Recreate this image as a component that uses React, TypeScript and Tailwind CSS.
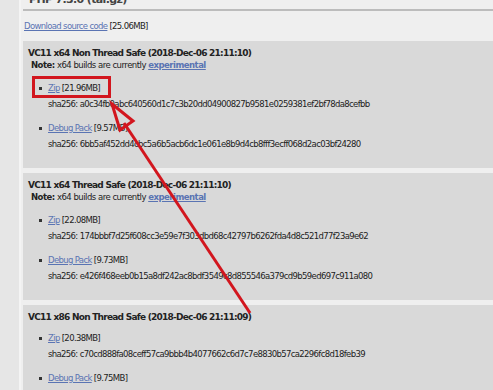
import React from "react";

type Item = { label: string; size: string; sha: string };
type Build = { title: string; note?: boolean; items: Item[] };

const BUILDS: Build[] = [
  {
    title: "VC11 x64 Non Thread Safe (2018-Dec-06 21:11:10)",
    note: true,
    items: [
      { label: "Zip", size: "[21.96MB]", sha: "a0c34fb0abc640560d1c7c3b20dd04900827b9581e0259381ef2bf78da8cefbb" },
      { label: "Debug Pack", size: "[9.57MB]", sha: "6bb5af452dd4cbc5a6b5acb6dc1e061e8b9d4cb8fff3ecff068d2ac03bf24280" },
    ],
  },
  {
    title: "VC11 x64 Thread Safe (2018-Dec-06 21:11:10)",
    note: true,
    items: [
      { label: "Zip", size: "[22.08MB]", sha: "174bbbf7d25f608cc3e59e7f303dbd68c42797b6262fda4d8c521d77f23a9e62" },
      { label: "Debug Pack", size: "[9.73MB]", sha: "e426f468eeb0b15a8df242ac8bdf3549c8d855546a379cd9b59ed697c911a080" },
    ],
  },
  {
    title: "VC11 x86 Non Thread Safe (2018-Dec-06 21:11:09)",
    items: [
      { label: "Zip", size: "[20.38MB]", sha: "c70cd888fa08ceff57ca9bbb4b4077662c6d7c7e8830b57ca2296fc8d18feb39" },
      { label: "Debug Pack", size: "[9.75MB]", sha: "" },
    ],
  },
];

const link = "text-[#5a74b3] underline underline-offset-1";

function BuildBox({ build }: { build: Build }) {
  return (
    <div className="bg-[#d9d9d9] pl-[5px] pt-[6px] pb-[18px]">
      <div className="font-bold text-[9px] tracking-[-0.75px] leading-[13px]">{build.title}</div>
      {build.note && (
        <div className="pl-[3px] leading-[11px] tracking-[-0.5px]">
          <b>Note:</b> x64 builds are currently <a className={`${link} font-bold`}>experimental</a>
        </div>
      )}
      <ul className={`pl-[20px] ${build.note ? "mt-[11px]" : "mt-[8px]"} flex flex-col gap-[12px]`}>
        {build.items.map((it) => (
          <li key={it.label} className="relative">
            <span className="absolute left-[-9px] top-[5px] h-[3px] w-[3px] bg-[#333]" />
            <div className="leading-[12px]">
              <a className={link}>{it.label}</a> {it.size}
            </div>
            {it.sha && <div className="mt-[4px] leading-[12px]">sha256: {it.sha}</div>}
          </li>
        ))}
      </ul>
    </div>
  );
}

export default function App() {
  return (
    <div
      className="relative flex h-[390px] w-[493px] overflow-hidden bg-[#e6e6e6] text-[8.5px] tracking-[-0.65px] text-[#222]"
      style={{ fontFamily: "'DejaVu Sans', Verdana, sans-serif" }}
    >
      <div className="w-[21px] shrink-0 border-r-[2px] border-[#f4f4f4]" />
      <div className="flex-1 bg-[#efefef] pl-[2px]">
        <div className="h-[9px] overflow-hidden">
          <div className="mt-[-8px] pl-[6px] font-bold text-[11px] text-[#444]">PHP 7.3.0 (tar.gz)</div>
        </div>
        <div className="h-[2px] bg-[#bcbcbc]" />
        <div className="pt-[9px] pl-px leading-[12px]">
          <a className={link}>Download source code</a> [25.06MB]
        </div>
        <div className="mt-[9px] flex flex-col gap-[5px]">
          {BUILDS.map((b) => (
            <BuildBox key={b.title} build={b} />
          ))}
        </div>
      </div>

      {/* annotation overlay */}
      <div className="pointer-events-none absolute left-[32px] top-[76px] h-[22px] w-[79px] border-[3px] border-[#d2161e]" />
      <svg className="pointer-events-none absolute left-0 top-0" width="493" height="390">
        <g stroke="#d2161e" strokeWidth="3" fill="none" strokeLinejoin="miter">
          <line x1="250" y1="313" x2="124" y2="123" />
          <polygon points="112,104 133,121 120,130" />
        </g>
      </svg>
    </div>
  );
}
